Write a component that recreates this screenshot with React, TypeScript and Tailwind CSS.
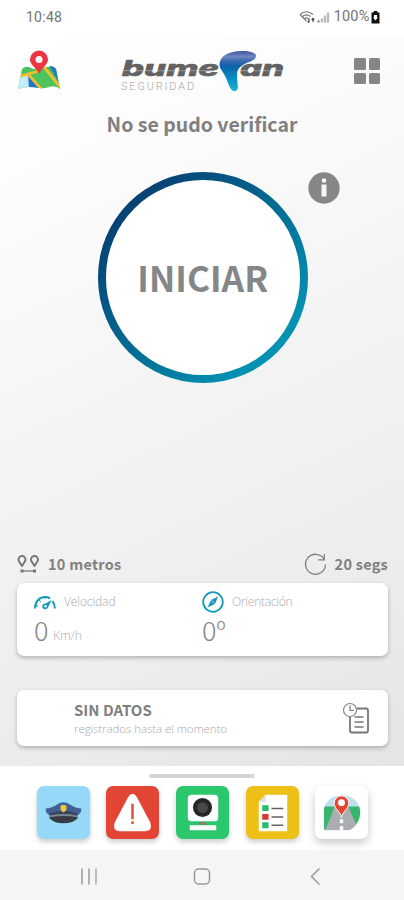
import React from "react";

const sans = "font-['Noto_Sans_CJK_SC','Open_Sans',sans-serif]";
const label = "font-['Open_Sans','Noto_Sans',sans-serif] font-light";

function StatusBar() {
  return (
    <div className="flex h-9 items-center justify-between bg-white pt-[2px] pl-[26px] pr-[24px] font-['Roboto',sans-serif] text-[14px] text-[#747474]">
      <span className="-mt-1 tracking-[0.25px]">10:48</span>
      <div className="-mt-1 flex items-center">
        <svg width="32" height="14" viewBox="0 0 32 14" fill="none" stroke="#777" strokeWidth="1.2">
          <path d="M1 4.500Q7.500-1 14 4.500M3.500 6.500Q7.500 3.200 11.500 6.500M5.500 8.700Q7.500 7 9.500 8.700M1 4.500L7.500 11" />
          <path d="M10 8.500v4M8.700 11.200l1.300 1.400M14 12V8.500M12.700 9.800L14 8.400l1.300 1.400" stroke="#444" />
          <path d="M23 8.500v4M26 5.500v7M29 2.500v10" stroke="#bbb" strokeWidth="2.400" />
          <path d="M19.500 10.500v2" stroke="#777" strokeWidth="2" />
        </svg>
        <span className="ml-[3px] text-[14.500px] tracking-[0.200px]">100%</span>
        <svg className="ml-[1.500px]" width="9" height="13" viewBox="0 0 9 13">
          <path d="M2.700 0h3.600v1.500H8.500V12.500H.5V1.500h2.200z" fill="#111" />
          <path d="M3 4h3v2.200h1L4.500 9.500 2 6.200h1z" fill="#fff" />
        </svg>
      </div>
    </div>
  );
}

function MapIcon() {
  return (
    <svg width="44" height="40" viewBox="0 0 44 40">
      <defs>
        <clipPath id="sheet">
          <path d="M5 19Q9 15 14 18 18 20 22 18T31 17Q36 15 39 19L43 39Q38 35 32 37T22 38 12 37 1 39z" />
        </clipPath>
      </defs>
      <g clipPath="url(#sheet)">
        <path d="M0 14h44v26H0z" fill="#4cc35c" />
        <path d="M0 27L12 24 14 40H0z" fill="#c4ecfa" />
        <path d="M11 24l13 16H12z" fill="#2378c5" />
        <path d="M31 14h10l3 22z" fill="#2378c5" />
        <path d="M0 27L22 21M11 24L26 41M27 17L44 38" stroke="#f1bd32" strokeWidth="2.800" fill="none" />
      </g>
      <path d="M22 24C20 18 13 15 13 9.500a9 9 0 0 1 18 0c0 5.500-7 8.500-9 14.500z" fill="#ed3440" />
      <circle cx="22" cy="9.500" r="3.500" fill="#fff" />
    </svg>
  );
}

function Logo() {
  return (
    <svg width="166" height="46" viewBox="0 0 166 46">
      <defs>
        <linearGradient id="boom" x1="0" y1="0" x2="0" y2="1">
          <stop offset="0" stopColor="#3f559f" />
          <stop offset=".14" stopColor="#6f86bf" />
          <stop offset=".26" stopColor="#3569b0" />
          <stop offset=".38" stopColor="#0e62ab" />
          <stop offset=".7" stopColor="#0791c4" />
          <stop offset="1" stopColor="#16b6d0" />
        </linearGradient>
      </defs>
      <g fill="#626262" stroke="#626262" strokeWidth=".6" fontFamily="Inter" fontWeight="800" fontStyle="italic" fontSize="21">
        <text x="1" y="27" textLength="97" lengthAdjust="spacingAndGlyphs">bume</text>
        <text x="119" y="27" textLength="44" lengthAdjust="spacingAndGlyphs">an</text>
      </g>
      <path d="M0 21.700H98M119 21.700H164" stroke="#fff" strokeWidth=".7" opacity=".5" />
      <path d="M98.500 15C99 7 108 2 121 2c8 0 14 1.500 14 5 0 5-8 5.500-13 9-5 3-6 6-6 11 0 5 1 8 .8 12-.5 3.500-4 4-6.500 1.500-3-4-4-10-7-15-2.300-4-4.800-6-4.800-10.500z" fill="url(#boom)" />
      <text x="0" y="41" fill="#a6a6a6" fontFamily="Roboto" fontWeight="300" fontSize="10.800" textLength="73">SEGURIDAD</text>
    </svg>
  );
}

function Header() {
  return (
    <header className="flex h-[70px] items-start justify-between pl-[17px] pr-[24px] pt-[13px]">
      <div className="mt-px"><MapIcon /></div>
      <div className="ml-[34px] mr-auto pl-[26px]"><Logo /></div>
      <div className="mt-[9px] grid grid-cols-2 gap-[3px]">
        {[0, 1, 2, 3].map((i) => <i key={i} className="size-[11.500px] rounded-[1.500px] bg-[#858585]" />)}
      </div>
    </header>
  );
}

function MetersIcon() {
  return (
    <svg width="23" height="18" viewBox="0 0 23 18" fill="none" stroke="#777" strokeWidth="2">
      <path d="M5 11.500C4.300 8 1.500 7.500 1.500 4.600a3.500 3.500 0 0 1 7 0C8.500 7.500 5.700 8 5 11.500zM17.500 11.500c-.7-3.500-3.500-4-3.500-6.900a3.500 3.500 0 0 1 7 0c0 2.900-2.800 3.400-3.500 6.900z" />
      <path d="M5 16h13" strokeWidth="1.300" />
      <path d="M3.500 16h3M16 16h3" strokeWidth="3" />
    </svg>
  );
}

function Readings() {
  return (
    <>
      <div className={`flex h-[38px] items-center justify-between pl-[17px] pr-[16px] text-[14.500px] font-bold text-[#808080] ${sans}`}>
        <div className="flex items-center gap-[8px]"><MetersIcon /><span className="tracking-[0.250px]">10 metros</span></div>
        <div className="flex items-center gap-[8px]">
          <svg width="23" height="23" viewBox="0 0 23 23" fill="none" stroke="#808080" strokeWidth="1.300">
            <path d="M20 6A10 10 0 1 0 21.500 11.500M20.300 1v5.800h-6" />
          </svg>
          <span className="tracking-[0.250px]">20 segs</span>
        </div>
      </div>
      <section className="ml-[17px] mr-[16px] grid h-[73px] grid-cols-[168px_1fr] rounded-[7px] bg-white pl-[17px] pt-[7px] shadow-[0_2px_4px_rgba(0,0,0,0.25)]">
        <div>
          <div className={`flex h-6 items-center text-[12px] text-[#aaa] ${label}`}>
            <svg width="22" height="15" viewBox="0 0 22 15" fill="none" stroke="#1499b8" strokeWidth="2">
              <path d="M1 13.500C1 7 5 2 11 2c2 0 3.500.3 5 1.300M18.500 6c1.500 2 2.300 4.500 2.300 7.500" />
              <path d="M1 10l3 1M5 5l2 2M11 1v3" strokeWidth="1" />
              <path d="M10 14c-3-1-2-6 1.500-5.500L17.500 5l-3 6.500c-1 2.500-2.500 3.200-4.500 2.500z" fill="#1499b8" stroke="none" />
              <circle cx="11.500" cy="11.300" r="1.200" fill="#fff" stroke="none" />
            </svg>
            <span className="ml-[8px] tracking-[-0.100px]">Velocidad</span>
          </div>
          <div className={`flex h-[34px] items-center text-[#858585] ${sans}`}>
            <span className="-mt-[2px] w-4 text-[27px] font-light">0</span>
            <span className={`ml-[3px] mt-[10px] text-[12px] text-[#aaa] ${label}`}>Km/h</span>
          </div>
        </div>
        <div>
          <div className={`flex h-6 items-center text-[12px] text-[#aaa] ${label}`}>
            <svg width="22" height="22" viewBox="0 0 22 22" fill="none" stroke="#1499b8" strokeWidth="1.800">
              <circle cx="11" cy="11" r="9.800" />
              <path d="M16 5.500l-3 7.500-7.500 3.500L9 9z" fill="#1499b8" stroke="none" />
              <path d="M9.500 9.500l3 3" stroke="#fff" strokeWidth=".7" />
            </svg>
            <span className="ml-[8px] tracking-[-0.250px]">Orientación</span>
          </div>
          <div className={`flex h-[34px] items-center text-[27px] font-light text-[#858585] ${sans}`}>
            <span className="-mt-[2px]">0</span>
            <span className="-mt-[2px] text-[23px]">º</span>
          </div>
        </div>
      </section>
    </>
  );
}

function RecordCard() {
  return (
    <section className="ml-[17px] mr-[16px] mt-[34px] flex h-[56px] items-center justify-between rounded-[7px] bg-white pl-[57px] pr-[18px] shadow-[0_2px_4px_rgba(0,0,0,0.25)]">
      <div className="flex flex-col pt-px">
        <span className={`h-5 text-[15px] leading-5 font-bold text-[#808080] ${sans}`}>SIN DATOS</span>
        <span className={`h-[18px] text-[11.500px] leading-[18px] tracking-[-0.070px] text-[#aaa] ${label}`}>registrados hasta el momento</span>
      </div>
      <svg width="28" height="33" viewBox="0 0 28 33" fill="none" stroke="#777" strokeWidth="1.800">
        <path d="M15 6.500h9q2 0 2 2v20q0 2-2 2H10q-2 0-2-2V14" />
        <circle cx="8" cy="8" r="6.500" strokeWidth="1.200" stroke="#888" />
        <path d="M8 3.500v5h4" strokeWidth="1.200" />
        <path d="M12.500 15h9M12.500 20h9M12.500 25h9" strokeWidth="1.300" />
      </svg>
    </section>
  );
}

function CapIcon() {
  return (
    <svg width="53" height="53" viewBox="0 0 54 54">
      <path d="M9 23q7-1 11-4 7-5 14 0 4 3 11 4c1 4-3 7-6 8H15c-3-1-7-4-6-8z" fill="#416098" />
      <path d="M13 28q14-5 28 0v4H13z" fill="#394557" />
      <path d="M13 30q14-3 28 0v3q-14-3-28 0z" fill="#7d8690" />
      <path d="M12 32q15-3 30 0-5 6-15 6T12 32z" fill="#363c45" />
      <path d="M24 20l3-1 3 1v4q-1 2-3 3-2-1-3-3z" fill="#edcc35" />
    </svg>
  );
}

function AlertIcon() {
  return (
    <svg width="53" height="53" viewBox="0 0 54 54">
      <path d="M22.500 11.500q4.500-7 9 0l13.500 25.500q3 9-5 9H14q-8 0-5-9z" fill="#fff" />
      <path d="M27 18v16" stroke="#dc5035" strokeWidth="2.500" />
      <circle cx="27" cy="37.500" r="1.500" fill="#dc5035" />
    </svg>
  );
}

function CameraIcon() {
  return (
    <svg width="53" height="53" viewBox="0 0 54 54">
      <rect x="12" y="9" width="31" height="27" rx="4" fill="#fff" />
      <circle cx="27" cy="22" r="9.700" fill="#262626" />
      <circle cx="27" cy="22" r="5.500" fill="#484848" />
      <path d="M23 37h8v2.500h-8z" fill="#94796e" />
      <path d="M14 40h27v5H14z" fill="#fff" />
    </svg>
  );
}

function ListIcon() {
  return (
    <svg width="53" height="53" viewBox="0 0 54 54">
      <path d="M20 9h22v37H13V16z" fill="#fff" />
      <path d="M20 9v7h-7z" fill="#ddd" />
      <path d="M16.500 19.500h6.500v6h-6.500zM16.500 37h6.500v6h-6.500z" fill="#2aba6b" />
      <path d="M16.500 28.500h6.500v6h-6.500z" fill="#d63b32" />
      <path d="M26 23h12M26 31.500h12M26 40h12" stroke="#66615c" strokeWidth="1.500" />
    </svg>
  );
}

function RouteIcon() {
  return (
    <svg width="53" height="53" viewBox="0 0 54 54">
      <defs>
        <clipPath id="scene"><path d="M9 24C12 5 43 4 46 25c1 10-6 18-12 20H11q-2 0-2-2z" /></clipPath>
      </defs>
      <g clipPath="url(#scene)">
        <path d="M5 5h44v17H5z" fill="#bce1ef" />
        <path d="M5 21h44v25H5z" fill="#36b66d" />
        <path d="M21 19h12l12 27H10z" fill="#aaaeb2" />
        <path d="M27 34v4M27 41v5" stroke="#fff" strokeWidth="3.500" />
      </g>
      <path d="M27 32c-1-6-7.500-8.500-7.500-14.500a7.500 7.500 0 0 1 15 0c0 6-6.500 8.500-7.500 14.500z" fill="#e64535" stroke="#fff" strokeWidth="1" />
      <circle cx="27" cy="17" r="3.500" fill="#fff" />
    </svg>
  );
}

const tile = "size-[53px] overflow-hidden rounded-[7px]";
const shade = "shadow-[0_3px_5px_rgba(0,0,0,0.2)]";

export default function App() {
  return (
    <div className="flex h-[900px] w-[404px] flex-col overflow-hidden bg-white">
      <StatusBar />
      <main className="h-[729.500px] bg-[linear-gradient(155deg,#ffffff_0%,#fbfbfb_22%,#f3f3f3_50%,#ededed_75%,#e4e4e4_100%)]">
        <Header />
        <h1 className={`h-9 text-center text-[19.500px] leading-9 font-bold text-[#808080] ${sans}`}>No se pudo verificar</h1>
        <div className="relative ml-[97.500px] mt-[30px] size-[210.500px] rounded-full bg-[linear-gradient(135deg,#073e70_12%,#04638d_43%,#0591b2_82%)] p-[8px]">
          <button className={`flex size-full items-center justify-center rounded-full bg-white text-[35.200px] font-bold text-[#858688] ${sans}`}>INICIAR</button>
          <svg className="absolute -right-[32px] top-0" width="32" height="32" viewBox="0 0 32 32">
            <circle cx="16" cy="16" r="15.700" fill="#858688" />
            <path d="M13.500 12.500h5v12h-5z" fill="#f5f5f5" />
            <circle cx="16" cy="8.500" r="2.300" fill="#f5f5f5" />
          </svg>
        </div>
        <div className="h-[162.500px]" />
        <Readings />
        <RecordCard />
      </main>
      <section className="flex h-[84px] flex-col items-center bg-white">
        <div className="mt-[8px] h-[4px] w-[106px] rounded-full bg-[#d4d4d4]" />
        <div className="mt-[8.500px] flex gap-[16.700px] pl-[1.200px]">
          <div className={`${tile} ${shade} bg-[#96d8f8]`}><CapIcon /></div>
          <div className={`${tile} ${shade} bg-[#e34535]`}><AlertIcon /></div>
          <div className={`${tile} ${shade} bg-[#2bc76d]`}><CameraIcon /></div>
          <div className={`${tile} ${shade} bg-[#edc017]`}><ListIcon /></div>
          <div className={`${tile} bg-white shadow-[0_4px_8px_rgba(0,0,0,0.22)]`}><RouteIcon /></div>
        </div>
      </section>
      <nav className="h-[50.500px] bg-[#f5f5f5]">
        <svg width="404" height="50" viewBox="0 0 404 50" fill="none" stroke="#999" strokeWidth="1.500">
          <path d="M82 18.500v16M89 18.500v16M319.500 18.500l-8 8 8 8" />
          <path d="M96 18.500v16" stroke="#bbb" strokeWidth="2" />
          <rect x="194.500" y="19" width="15" height="15" rx="4" />
        </svg>
      </nav>
    </div>
  );
}
